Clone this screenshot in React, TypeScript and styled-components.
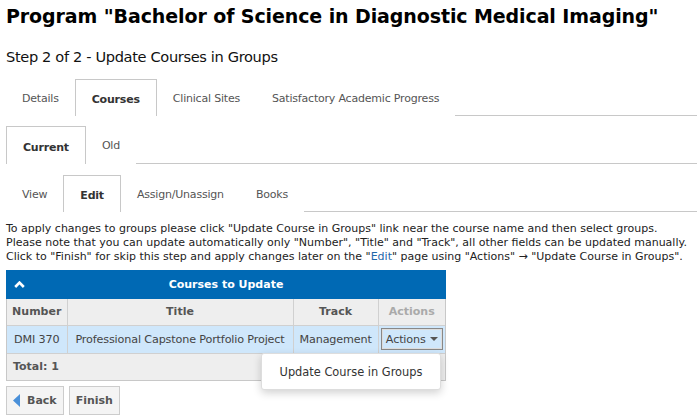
import React from "react";
import styled, { createGlobalStyle } from "styled-components";

const GlobalStyle = createGlobalStyle`
  body {
    margin: 0;
    background: #fff;
    font-family: "DejaVu Sans", Verdana, sans-serif;
    color: #333;
  }
`;

const StyledPage = styled.div`
  padding: 3px 6px 0 6px;
`;

const StyledTitle = styled.h1`
  margin: 0;
  font-size: 19px;
  font-weight: 700;
  color: #000;
  letter-spacing: -0.1px;
  line-height: 26px;
`;

const StyledStep = styled.div`
  margin: 18px 0 0;
  font-size: 14.6px;
  color: #111;
  line-height: 20px;
  letter-spacing: -0.35px;
`;

const StyledTabBar = styled.div<{ $top: number; $height: number }>`
  display: flex;
  height: ${(p) => p.$height}px;
  margin-top: ${(p) => p.$top}px;
  border-bottom: 1px solid #c8c8c8;
  margin-right: -6px;
`;

const StyledTab = styled.div<{ $active?: boolean }>`
  padding: ${(p) => (p.$active ? "3px 16px 0" : "0 15px")};
  display: flex;
  align-items: center;
  font-size: 11px;
  letter-spacing: -0.2px;
  color: ${(p) => (p.$active ? "#333" : "#555")};
  font-weight: ${(p) => (p.$active ? 700 : 400)};
  border: 1px solid ${(p) => (p.$active ? "#c8c8c8" : "transparent")};
  border-bottom: none;
  background: #fff;
  box-sizing: border-box;
  height: calc(100% + 1px);
`;

const StyledNote = styled.div`
  margin-top: 10px;
  font-size: 11px;
  letter-spacing: 0;
  line-height: 14px;
  color: #222;
`;

const StyledLink = styled.span`
  color: #1f67a9;
`;

const StyledGrid = styled.div`
  margin-top: 6px;
  width: 438px;
  border: 1px solid #c8c8c8;
  border-top: none;
  position: relative;
`;

const StyledGridHeader = styled.div`
  height: 29px;
  background: #0069b4;
  color: #fff;
  font-weight: 700;
  font-size: 11px;
  display: flex;
  align-items: center;
  justify-content: center;
  position: relative;
  margin: 0 -1px;
`;

const StyledCollapse = styled.span`
  position: absolute;
  left: 8px;
  top: 11px;
  display: flex;
`;

const StyledTable = styled.table`
  border-collapse: collapse;
  width: 100%;
  font-size: 11px;
  table-layout: fixed;
`;

const StyledTh = styled.th<{ $muted?: boolean; $w?: number }>`
  width: ${(p) => (p.$w ? `${p.$w}px` : "auto")};
  background: #eee;
  height: 26px;
  border: 1px solid #d0d0d0;
  border-top: none;
  color: ${(p) => (p.$muted ? "#aaa" : "#555")};
  font-weight: 700;
  padding: 0 4px;
  box-sizing: border-box;
  &:first-child {
    border-left: none;
  }
  &:last-child {
    border-right: none;
  }
`;

const StyledTd = styled.td`
  background: #cfe7fb;
  height: 28px;
  border: 1px solid #d0d0d0;
  color: #444;
  padding: 0 6px;
  white-space: nowrap;
  font-size: 11.2px;
  letter-spacing: -0.15px;
  box-sizing: border-box;
  text-align: center;
  &:first-child {
    border-left: none;
  }
  &:last-child {
    border-right: none;
    padding: 0 2px;
  }
`;

const StyledActionsButton = styled.div`
  display: inline-flex;
  align-items: center;
  gap: 4px;
  height: 22px;
  padding: 0 4px;
  border: 1px solid #888;
  box-shadow: inset 0 0 0 1px #ddd;
  color: #444;
  font-size: 11.2px;
  box-sizing: border-box;
`;

const StyledFooter = styled.div`
  height: 26px;
  background: #eee;
  display: flex;
  align-items: center;
  padding-left: 6px;
  font-size: 11px;
  font-weight: 700;
  color: #555;
`;

const StyledMenu = styled.div`
  position: absolute;
  left: 254px;
  top: 83px;
  width: 180px;
  height: 37px;
  background: #fff;
  border: 1px solid #ddd;
  border-radius: 3px;
  box-shadow: 0 3px 8px rgba(0, 0, 0, 0.18);
  display: flex;
  align-items: center;
  justify-content: center;
  font-size: 11.4px;
  color: #333;
  box-sizing: border-box;
`;

const StyledButtons = styled.div`
  display: flex;
  gap: 5px;
  margin-top: 5px;
`;

const StyledButton = styled.div`
  display: flex;
  align-items: center;
  gap: 7px;
  height: 29px;
  padding: 0 6px;
  border: 1px solid #ccc;
  background: #f4f4f4;
  color: #555;
  font-weight: 700;
  font-size: 11px;
  box-sizing: border-box;
`;

const App = () => {
  return (
    <StyledPage>
      <GlobalStyle />
      <StyledTitle>Program "Bachelor of Science in Diagnostic Medical Imaging"</StyledTitle>
      <StyledStep>Step 2 of 2 - Update Courses in Groups</StyledStep>

      <StyledTabBar $top={12} $height={36}>
        <StyledTab>Details</StyledTab>
        <StyledTab $active>Courses</StyledTab>
        <StyledTab>Clinical Sites</StyledTab>
        <StyledTab>Satisfactory Academic Progress</StyledTab>
      </StyledTabBar>

      <StyledTabBar $top={10} $height={37}>
        <StyledTab $active>Current</StyledTab>
        <StyledTab>Old</StyledTab>
      </StyledTabBar>

      <StyledTabBar $top={11} $height={36}>
        <StyledTab>View</StyledTab>
        <StyledTab $active>Edit</StyledTab>
        <StyledTab>Assign/Unassign</StyledTab>
        <StyledTab>Books</StyledTab>
      </StyledTabBar>

      <StyledNote>
        To apply changes to groups please click "Update Course in Groups" link near the course name and then select groups.
        <br />
        Please note that you can update automatically only "Number", "Title" and "Track", all other fields can be updated manually.
        <br />
        Click to "Finish" for skip this step and apply changes later on the "<StyledLink>Edit</StyledLink>" page using "Actions" → "Update Course in Groups".
      </StyledNote>

      <StyledGrid>
        <StyledGridHeader>
          <StyledCollapse>
            <svg width="11" height="7" viewBox="0 0 11 7">
              <path d="M1.2 6 L5.5 1.6 L9.8 6" stroke="#fff" strokeWidth="2.6" fill="none" />
            </svg>
          </StyledCollapse>
          Courses to Update
        </StyledGridHeader>
        <StyledTable>
          <thead>
            <tr>
              <StyledTh $w={60}>Number</StyledTh>
              <StyledTh>Title</StyledTh>
              <StyledTh $w={85}>Track</StyledTh>
              <StyledTh $muted $w={67}>Actions</StyledTh>
            </tr>
          </thead>
          <tbody>
            <tr>
              <StyledTd>DMI 370</StyledTd>
              <StyledTd>Professional Capstone Portfolio Project</StyledTd>
              <StyledTd>Management</StyledTd>
              <StyledTd>
                <StyledActionsButton>
                  Actions
                  <svg width="8" height="4" viewBox="0 0 8 4">
                    <path d="M0 0 L8 0 L4 4 Z" fill="#555" />
                  </svg>
                </StyledActionsButton>
              </StyledTd>
            </tr>
          </tbody>
        </StyledTable>
        <StyledFooter>Total: 1</StyledFooter>
        <StyledMenu>Update Course in Groups</StyledMenu>
      </StyledGrid>

      <StyledButtons>
        <StyledButton>
          <svg width="7" height="13" viewBox="0 0 7 13">
            <path d="M7 0 L0 6.5 L7 13 Z" fill="#4a90d9" />
          </svg>
          Back
        </StyledButton>
        <StyledButton>Finish</StyledButton>
      </StyledButtons>
    </StyledPage>
  );
};

export default App;
